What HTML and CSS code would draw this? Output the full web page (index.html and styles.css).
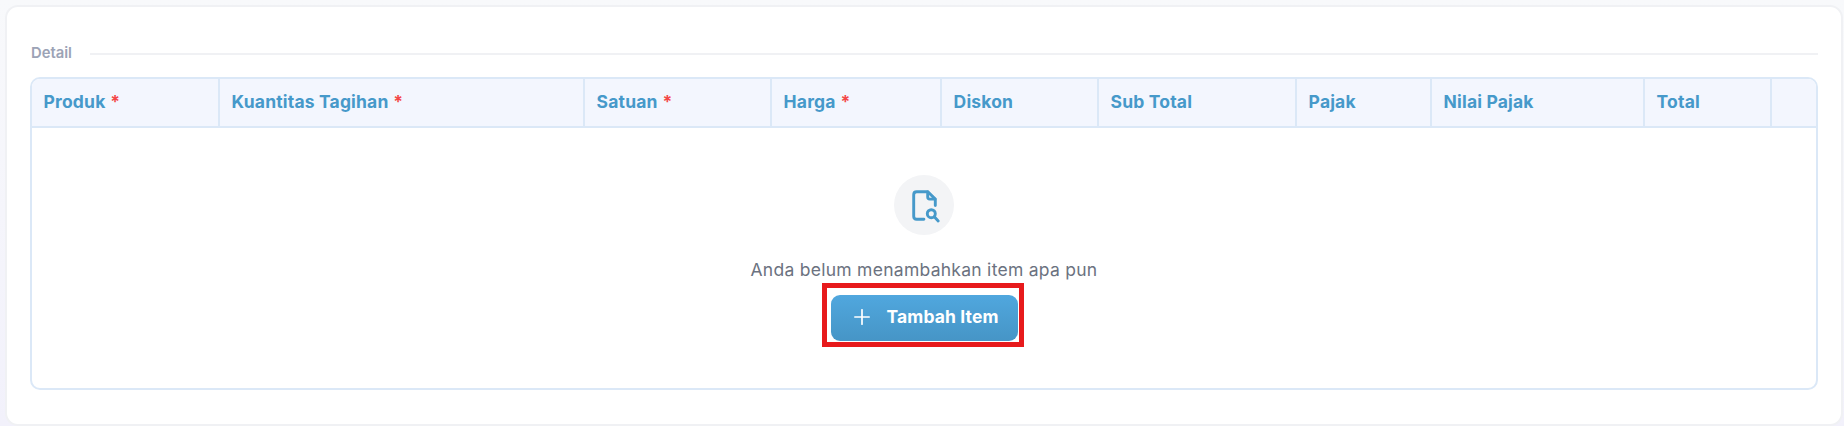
FILE: index.html
```
<!DOCTYPE html>
<html lang="id">
<head>
<meta charset="utf-8">
<title>Detail</title>
<link rel="stylesheet" href="styles.css">
</head>
<body>
<main class="card">
  <div class="section-title"><span class="section-label">Detail</span><span class="section-line"></span></div>
  <section class="table">
    <div class="table-head">
      <div class="cell">Produk <span class="required">*</span></div>
      <div class="cell">Kuantitas Tagihan <span class="required">*</span></div>
      <div class="cell">Satuan <span class="required">*</span></div>
      <div class="cell">Harga <span class="required">*</span></div>
      <div class="cell">Diskon</div>
      <div class="cell">Sub Total</div>
      <div class="cell">Pajak</div>
      <div class="cell">Nilai Pajak</div>
      <div class="cell">Total</div>
      <div class="cell"></div>
    </div>
    <div class="empty">
      <div class="empty-icon">
        <svg class="file-search" width="30" height="34" viewBox="0 0 30 34" fill="none" stroke="#4699ca" stroke-width="2.9" stroke-linecap="round" stroke-linejoin="round">
          <path d="M14.9 31.3H7.7Q4.7 31.3 4.7 28.3V6.7Q4.7 3.7 7.7 3.7H18.9L26.3 11.1V17.6"/>
          <path d="M18.7 4V9.1Q18.7 11.1 20.7 11.1H26"/>
          <circle cx="22.3" cy="25.7" r="4"/>
          <path d="M25.3 28.8L29.2 32.9"/>
        </svg>
      </div>
      <p class="empty-text">Anda belum menambahkan item apa pun</p>
      <div class="highlight">
        <button class="add-button" type="button">
          <svg class="plus" width="16" height="16" viewBox="0 0 16 16" stroke="#fff" stroke-width="1.7" stroke-linecap="round"><path d="M8 .8V15.2M.8 8H15.2"/></svg>
          <span>Tambah Item</span>
        </button>
      </div>
    </div>
  </section>
</main>
</body>
</html>
```
FILE: styles.css
```
* { box-sizing: border-box; }

body {
  margin: 0;
  height: 426px;
  padding: 5px 1px 0 5px;
  overflow: hidden;
  background: linear-gradient(#f8f9fb, #f2f1fb);
  font-family: Inter, "Liberation Sans", sans-serif;
}

.card {
  height: 421px;
  padding: 36px 23px 0 23px;
  border: 2px solid #f0f1f4;
  border-radius: 13px;
  background: #fff;
}

.section-title {
  display: flex;
  align-items: center;
  height: 22px;
}

.section-label {
  width: 60px;
  padding: 0 0 2px 1px;
  color: #9ca3b6;
  font-size: 14.8px;
  font-weight: 600;
  line-height: 20px;
}

.section-line {
  flex: 1;
  height: 2px;
  background: #f0f1f4;
}

.table {
  height: 313px;
  margin-top: 12px;
  border: 2px solid #dbe8f7;
  border-radius: 10px;
  overflow: hidden;
}

.table-head {
  display: grid;
  grid-template-columns: 188px 365px 187px 170px 157px 198px 135px 213px 127px 1fr;
  height: 49px;
  border-bottom: 2px solid #dbe8f7;
  background: #f3f6fe;
}

.cell {
  padding: 0 0 2px 11.6px;
  border-right: 2px solid #dbe8f7;
  color: #4699ca;
  font-size: 17.5px;
  font-weight: 700;
  letter-spacing: .17px;
  line-height: 45px;
  white-space: nowrap;
}

.cell:last-child { border-right: 0; }

.required {
  margin-left: .5px;
  color: #f44747;
}

.empty {
  display: flex;
  flex-direction: column;
  align-items: center;
  padding-top: 47px;
}

.empty-icon {
  display: flex;
  align-items: center;
  justify-content: center;
  width: 60px;
  height: 60px;
  border-radius: 50%;
  background: #f3f4f6;
}

.file-search { overflow: visible; }

.empty-text {
  margin: 22px 0 0;
  color: #6b7280;
  font-size: 17.5px;
  letter-spacing: .27px;
  line-height: 26px;
}

.highlight {
  width: 202px;
  height: 64px;
  margin-right: 2px;
  padding: 7px 2px 0 3.5px;
  border: 5px solid #e71a1c;
}

.add-button {
  display: flex;
  align-items: center;
  gap: 17px;
  width: 187px;
  height: 46px;
  padding: 0 0 2px 23px;
  border: 0;
  border-radius: 9px;
  background: linear-gradient(#50a7de, #4695c6);
  color: #fff;
  font: 700 17.5px Inter, "Liberation Sans", sans-serif;
  letter-spacing: .12px;
  white-space: nowrap;
}

.add-button span { padding-bottom: 1px; }

.plus { flex: none; }
```
